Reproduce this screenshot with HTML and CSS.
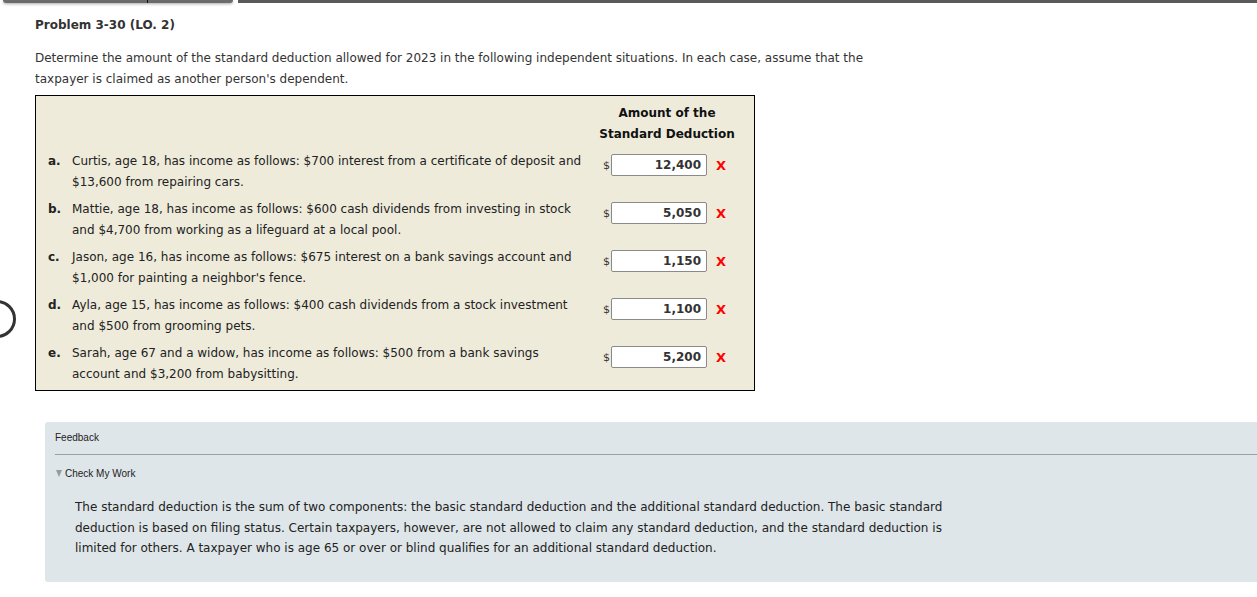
FILE: index.html
```html
<!DOCTYPE html>
<html>
<head>
<meta charset="utf-8">
<link rel="stylesheet" href="styles.css">
</head>
<body>
<div class="topbar">
  <div class="tabs"><span class="tab tab1"></span><span class="tab tab2"></span></div>
  <div class="topline"></div>
</div>
<div class="ring"></div>
<main class="page">
  <h1 class="title">Problem 3-30 (LO. 2)</h1>
  <p class="intro">Determine the amount of the standard deduction allowed for 2023 in the following independent situations. In each case, assume that the taxpayer is claimed as another person's dependent.</p>
  <div class="qtable">
    <div class="head"></div>
    <div class="head"></div>
    <div class="head amt-head">Amount of the<br>Standard Deduction</div>

    <div class="letter">a.</div>
    <div class="desc">Curtis, age 18, has income as follows: $700 interest from a certificate of deposit and $13,600 from repairing cars.</div>
    <div class="amt"><span class="dollar">$</span><span class="inp">12,400</span><span class="x">X</span></div>

    <div class="letter">b.</div>
    <div class="desc">Mattie, age 18, has income as follows: $600 cash dividends from investing in stock and $4,700 from working as a lifeguard at a local pool.</div>
    <div class="amt"><span class="dollar">$</span><span class="inp">5,050</span><span class="x">X</span></div>

    <div class="letter">c.</div>
    <div class="desc">Jason, age 16, has income as follows: $675 interest on a bank savings account and $1,000 for painting a neighbor's fence.</div>
    <div class="amt"><span class="dollar">$</span><span class="inp">1,150</span><span class="x">X</span></div>

    <div class="letter">d.</div>
    <div class="desc">Ayla, age 15, has income as follows: $400 cash dividends from a stock investment and $500 from grooming pets.</div>
    <div class="amt"><span class="dollar">$</span><span class="inp">1,100</span><span class="x">X</span></div>

    <div class="letter">e.</div>
    <div class="desc">Sarah, age 67 and a widow, has income as follows: $500 from a bank savings account and $3,200 from babysitting.</div>
    <div class="amt"><span class="dollar">$</span><span class="inp">5,200</span><span class="x">X</span></div>
  </div>

  <section class="feedback">
    <div class="fb-title">Feedback</div>
    <div class="fb-rule"></div>
    <div class="fb-check"><span class="tri"></span>Check My Work</div>
    <p class="fb-text">The standard deduction is the sum of two components: the basic standard deduction and the additional standard deduction. The basic standard deduction is based on filing status. Certain taxpayers, however, are not allowed to claim any standard deduction, and the standard deduction is limited for others. A taxpayer who is age 65 or over or blind qualifies for an additional standard deduction.</p>
  </section>
</main>
</body>
</html>
```

FILE: styles.css
```css
html, body {
  margin: 0;
  padding: 0;
  background: #ffffff;
  overflow: hidden;
}
body {
  font-family: "DejaVu Sans", Verdana, sans-serif;
  font-size: 12px;
  color: #333333;
  width: 1257px;
  height: 597px;
  position: relative;
}
.topbar {
  display: flex;
  height: 4px;
  align-items: flex-start;
}
.tabs {
  display: flex;
  margin-left: 3px;
  width: 230px;
  height: 3px;
  background: #6b6b6b;
  border-radius: 0 0 4px 4px;
  box-shadow: 0 1px 3px rgba(0,0,0,0.35);
}
.tab1 {
  width: 144px;
  border-right: 1px solid #111;
}
.topline {
  margin-left: 5px;
  flex: 1;
  height: 3px;
  background: #5a5a5a;
}
.ring {
  position: absolute;
  left: -22px;
  top: 300px;
  width: 32px;
  height: 32px;
  border: 3px solid #333;
  border-radius: 50%;
}
.page {
  padding-left: 35px;
}
.title {
  font-size: 12px;
  font-weight: bold;
  margin: 11px 0 0 0;
  line-height: 21px;
  color: #333;
}
.intro {
  margin: 12px 0 0 0;
  width: 840px;
  line-height: 21px;
}
.qtable {
  margin-top: 5px;
  width: 706px;
  border: 1px solid #000;
  background: #eeebdb;
  display: grid;
  grid-template-columns: 24px 525px 140px;
  row-gap: 6px;
  padding: 7px 0 5px 12px;
  line-height: 21px;
  color: #222;
}
.head {
  font-weight: bold;
}
.amt-head {
  text-align: center;
  color: #111;
}
.letter {
  font-weight: bold;
}
.desc {
  padding-right: 8px;
}
.amt {
  display: flex;
  align-items: center;
  padding-left: 6px;
  margin-top: 3px;
  height: 22px;
}
.dollar {
  width: 8px;
  font-size: 11px;
  color: #333;
}
.inp {
  box-sizing: border-box;
  width: 96px;
  height: 22px;
  border: 1px solid #8a8a8a;
  border-radius: 2px;
  background: #fff;
  text-align: right;
  font-weight: bold;
  padding-right: 5px;
  line-height: 20px;
  color: #333;
}
.x {
  margin-left: 9px;
  color: #ff0000;
  font-weight: bold;
  font-size: 13px;
}
.feedback {
  margin: 31px 0 0 10px;
  background: #dfe6e9;
  height: 160px;
  border-radius: 3px 0 0 3px;
  padding-left: 10px;
}
.fb-title {
  font-family: "Liberation Sans", Arial, sans-serif;
  font-size: 10px;
  padding-top: 10px;
  line-height: 12px;
  color: #222;
}
.fb-rule {
  margin-top: 10px;
  height: 1px;
  background: #9aa0a3;
}
.fb-check {
  display: flex;
  align-items: center;
  font-family: "Liberation Sans", Arial, sans-serif;
  font-size: 10px;
  margin-top: 13px;
  line-height: 12px;
  color: #222;
}
.tri {
  display: inline-block;
  width: 0;
  height: 0;
  border-left: 3px solid transparent;
  border-right: 3px solid transparent;
  border-top: 7px solid #999;
  margin: -2px 3px 0 1px;
}
.fb-text {
  margin: 17px 0 0 20px;
  width: 880px;
  line-height: 20.5px;
  color: #222;
}
```
